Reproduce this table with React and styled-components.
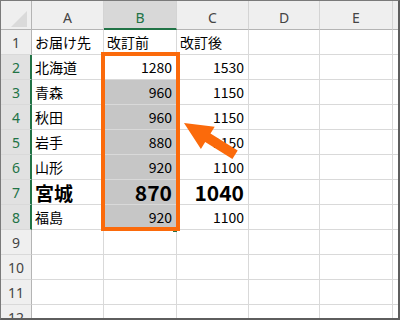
import React from "react";
import styled, { createGlobalStyle } from "styled-components";

const GlobalStyle = createGlobalStyle`
  html, body {
    margin: 0;
    padding: 0;
    background: #ffffff;
  }
`;

const GREEN = "#217346";
const ORANGE = "#fb6a0b";
const GRID = "#d9d9d9";
const HEAD_LINE = "#b4b4b4";

const colWidths = [31, 72, 73, 72, 71, 73, 10];

const Sheet = styled.div`
  position: relative;
  width: 400px;
  height: 320px;
  box-sizing: border-box;
  border-top: 1px solid #7a7a7a;
  border-left: 1px solid #7a7a7a;
  border-right: 2px solid #5e5e5e;
  border-bottom: 2px solid #5e5e5e;
  overflow: hidden;
  font-family: "Noto Sans CJK JP", "Noto Sans", sans-serif;
`;

const Grid = styled.div`
  display: grid;
  grid-template-columns: ${colWidths.map((w) => w + "px").join(" ")};
  grid-template-rows: 29px repeat(12, 25px);
`;

const Corner = styled.div`
  position: relative;
  box-sizing: border-box;
  background: #efefef;
  border-right: 1px solid ${HEAD_LINE};
  border-bottom: 1px solid ${HEAD_LINE};

  &::after {
    content: "";
    position: absolute;
    right: 4px;
    bottom: 2px;
    width: 0;
    height: 0;
    border-left: 16px solid transparent;
    border-bottom: 16px solid #dadada;
  }
`;

const ColHeader = styled.div`
  box-sizing: border-box;
  display: flex;
  align-items: center;
  justify-content: center;
  padding-top: 5px;
  background: ${(p) => (p.$selected ? "#d8d8d8" : "#efefef")};
  color: ${(p) => (p.$selected ? GREEN : "#444")};
  border-right: 1px solid #d4d4d4;
  border-bottom: ${(p) =>
    p.$selected ? `2px solid ${GREEN}` : `1px solid ${HEAD_LINE}`};
  font-family: "Noto Sans", sans-serif;
  font-size: 14px;
`;

const RowHeader = styled.div`
  box-sizing: border-box;
  display: flex;
  align-items: center;
  justify-content: center;
  background: ${(p) => (p.$selected ? "#e1e1e1" : "#efefef")};
  color: ${(p) => (p.$selected ? GREEN : "#444")};
  border-right: ${(p) =>
    p.$selected ? `2px solid ${GREEN}` : `1px solid ${HEAD_LINE}`};
  border-bottom: 1px solid ${GRID};
  font-family: "Noto Sans", sans-serif;
  font-size: 14px;
  padding-left: ${(p) => (p.$selected ? "1px" : "0")};
`;

const Cell = styled.div`
  box-sizing: border-box;
  display: flex;
  align-items: center;
  justify-content: ${(p) => (p.$num ? "flex-end" : "flex-start")};
  padding: 0 4px 0 3px;
  background: ${(p) => (p.$shaded ? "#c6c6c6" : "#ffffff")};
  border-right: 1px solid ${GRID};
  border-bottom: 1px solid ${GRID};
  color: #000;
  font-size: ${(p) => (p.$bold ? (p.$num ? "21px" : "19px") : "14px")};
  font-weight: ${(p) => (p.$bold ? 700 : 400)};
  white-space: nowrap;
  overflow: visible;
`;

const SelectionFrame = styled.div`
  position: absolute;
  left: 100px;
  top: 51px;
  width: 79px;
  height: 179px;
  box-sizing: border-box;
  border: 4px solid ${ORANGE};
  pointer-events: none;
`;

const FillHandle = styled.div`
  position: absolute;
  left: 172px;
  top: 227px;
  width: 4px;
  height: 4px;
  background: ${GREEN};
`;

const ArrowLayer = styled.svg`
  position: absolute;
  left: 0;
  top: 0;
  pointer-events: none;
`;

const rows = [
  ["お届け先", "改訂前", "改訂後"],
  ["北海道", 1280, 1530],
  ["青森", 960, 1150],
  ["秋田", 960, 1150],
  ["山形", 880, 1150],
  ["山形", 920, 1100],
  ["宮城", 870, 1040],
  ["福島", 920, 1100],
];
rows[4][0] = "岩手";

const cols = ["A", "B", "C", "D", "E", ""];

export default function App() {
  const body = [];
  for (let r = 1; r <= 12; r++) {
    const data = rows[r - 1] || [];
    const selectedRow = r >= 2 && r <= 8;
    body.push(
      <RowHeader key={`h${r}`} $selected={selectedRow}>
        {r}
      </RowHeader>
    );
    cols.forEach((c, i) => {
      const v = data[i];
      const num = typeof v === "number";
      const shaded = c === "B" && r >= 3 && r <= 8;
      body.push(
        <Cell key={`${c}${r}${i}`} $num={num} $shaded={shaded} $bold={r === 7}>
          {v}
        </Cell>
      );
    });
  }

  return (
    <>
      <GlobalStyle />
      <Sheet>
        <Grid>
          <Corner />
          {cols.map((c, i) => (
            <ColHeader key={`c${i}`} $selected={c === "B"}>
              {c}
            </ColHeader>
          ))}
          {body}
        </Grid>
        <FillHandle />
        <SelectionFrame />
        <ArrowLayer width="400" height="320" viewBox="0 0 400 320">
          <polygon
            fill={ORANGE}
            points="183,122 213.7,125.8 209.5,132.6 236.7,149.6 231.4,158 204.2,141 199.9,147.9"
          />
        </ArrowLayer>
      </Sheet>
    </>
  );
}
